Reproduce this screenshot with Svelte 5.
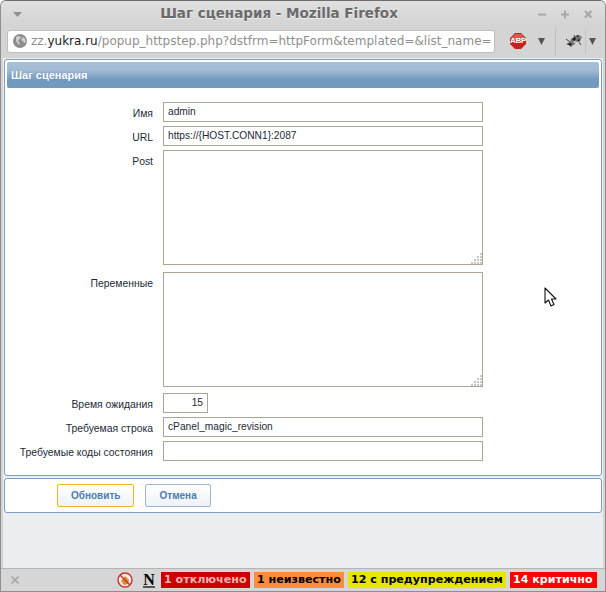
<script>
  const rows = [
    { label: 'Имя', value: 'admin', kind: 'text' },
    { label: 'URL', value: 'https://{HOST.CONN1}:2087', kind: 'text' },
    { label: 'Post', value: '', kind: 'area' },
    { label: 'Переменные', value: '', kind: 'area' },
    { label: 'Время ожидания', value: '15', kind: 'num' },
    { label: 'Требуемая строка', value: 'cPanel_magic_revision', kind: 'text' },
    { label: 'Требуемые коды состояния', value: '', kind: 'text' }
  ];
  const grip = [[10,0],[10,3],[7,3],[10,6],[7,6],[4,6],[10,9],[7,9],[4,9],[1,9]];
</script>

<div class="window">
  <header class="titlebar">
    <svg class="menu" width="9" height="5" viewBox="0 0 9 5"><path d="M0 0h9L4.500 5z" fill="#8f8f8f"/></svg>
    <div class="title">Шаг сценария - Mozilla Firefox</div>
    <div class="controls">
      <svg width="9" height="9" viewBox="0 0 9 9"><path d="M0 4.500h8" stroke="#a8a8a8" stroke-width="2"/></svg>
      <svg width="9" height="9" viewBox="0 0 9 9"><path d="M0 4.500h8M4 .500v8" stroke="#a8a8a8" stroke-width="2"/></svg>
      <svg width="9" height="9" viewBox="0 0 9 9"><path d="M1 1l6.500 6.500M7.500 1L1 7.500" stroke="#a8a8a8" stroke-width="2.400"/></svg>
    </div>
  </header>

  <div class="toolbar">
    <div class="urlbar">
      <svg class="globe" width="14" height="14" viewBox="0 0 14 14">
        <circle cx="7" cy="7" r="7" fill="#8c8c8c"/>
        <path d="M3 3l3-1 2 1-1 2-2 1 1 2 1 3-2-1-2-3zM10 3l2 2 1 3-2 1-1-2-2-1z" fill="#cfcfcf"/>
      </svg>
      <span class="url"><span class="dim">zz.</span><span class="host">yukra.ru</span><span class="dim">/popup_httpstep.php?dstfrm=httpForm&amp;templated=&amp;list_name=</span></span>
    </div>
    <div class="abp">
      <svg width="16" height="16" viewBox="0 0 16 16"><path d="M5 0h6l5 5v6l-5 5H5l-5-5V5z" fill="#c9201c"/><path d="M5 1h6l4 4v2H1V5z" fill="#e2564f"/></svg>
      <span>ABP</span>
    </div>
    <svg class="arrow first" width="7" height="7" viewBox="0 0 7 7"><path d="M0 0h7L3.500 7z" fill="#555"/></svg>
    <div class="sep"></div>
    <svg class="bug" width="18" height="14" viewBox="0 0 18 14">
      <path d="M1 10l4-2 1-3 4-3 4-1 3 2-2 4-4 1-2 3-3 1z" fill="#777"/>
      <path d="M2 10l3-1 2 1-1 2zM7 5l3-2 1 2-2 2zM12 6l3-1-1 3zM11 1.500h3l-1 2z" fill="#1c1c1c"/>
      <path d="M1 5l4 3M9 1l1 3M14 8l2 3M5 11l1 2" stroke="#444" stroke-width="1"/>
      <path d="M8 8l3-1-1 2z" fill="#eee"/>
    </svg>
    <div class="sep thin"></div>
    <svg class="arrow last" width="7" height="7" viewBox="0 0 7 7"><path d="M0 0h7L3.500 7z" fill="#555"/></svg>
  </div>

  <main class="content">
    <section class="panel form-panel">
      <h1 class="head">Шаг сценария</h1>
      <div class="form">
        {#each rows as row}
          <div class="row">
            <span class="label">{row.label}</span>
            {#if row.kind === 'area'}
              <div class="field area">
                <svg class="grip" width="12" height="11" viewBox="0 0 12 11">
                  {#each grip as g}
                    <rect x={g[0]} y={g[1]} width="2" height="2" fill="#c8c8c8"/>
                  {/each}
                </svg>
              </div>
            {:else}
              <div class="field" class:num={row.kind === 'num'}>{row.value}</div>
            {/if}
          </div>
        {/each}
      </div>
    </section>
    <section class="panel actions">
      <button class="btn update">Обновить</button>
      <button class="btn">Отмена</button>
    </section>
  </main>

  <footer class="status">
    <svg class="close" width="10" height="10" viewBox="0 0 10 10"><path d="M1.500 1.500l7 7M8.500 1.500l-7 7" stroke="#a4a4a4" stroke-width="1.600"/></svg>
    <svg class="noscript" width="16" height="16" viewBox="0 0 16 16">
      <circle cx="8" cy="8" r="7" fill="#f3efe8" stroke="#c8332c" stroke-width="1.400"/>
      <path d="M4 9l4-5 4 4-1 4-4 1z" fill="#d98c2c"/>
      <path d="M3 3l10 10" stroke="#c8332c" stroke-width="1.400"/>
    </svg>
    <span class="n">N</span>
    <div class="badges">
      <span class="badge off">1 отключено</span>
      <span class="badge unk">1 неизвестно</span>
      <span class="badge warn">12 с предупреждением</span>
      <span class="badge crit">14 критично</span>
    </div>
  </footer>

  <svg class="cursor" width="14" height="21" viewBox="0 0 14 21"><path d="M1 1v15l3.500-3 2.500 6 3-1.500-2.500-5.500H12z" fill="#fff" stroke="#111" stroke-width="1.100" stroke-linejoin="round"/></svg>
</div>

<style>
  :global(body) { margin: 0; }
  .window {
    position: relative;
    width: 606px;
    height: 592px;
    box-sizing: border-box;
    display: flex;
    flex-direction: column;
    background: #d4d4d4;
    border: 1px solid #8e8e8e;
    border-top-color: #6f6f6f;
    border-radius: 6px 6px 0 0;
    overflow: hidden;
    font-family: "Liberation Sans", sans-serif;
  }
  .titlebar {
    height: 23px;
    flex: none;
    display: flex;
    align-items: center;
    position: relative;
    background: linear-gradient(#e0e0e0, #d4d4d4);
  }
  .menu { margin-left: 12px; margin-top: 3px; }
  .title {
    position: absolute;
    left: 0;
    right: 0;
    top: 4px;
    text-align: center;
    font: bold 13.500px "DejaVu Sans", sans-serif;
    color: #6a6a6a;
    text-shadow: 0 1px 0 #f2f2f2;
    padding-right: 48px;
  }
  .controls {
    margin-left: auto;
    margin-right: 12px;
    margin-top: 3px;
    display: flex;
    gap: 14px;
  }
  .controls svg { display: block; }
  .toolbar {
    height: 34px;
    flex: none;
    display: flex;
    align-items: center;
    background: #d4d4d4;
    padding-left: 6px;
    box-sizing: border-box;
  }
  .urlbar {
    width: 488px;
    height: 23px;
    box-sizing: border-box;
    background: #fff;
    border: 1px solid #bdbdbd;
    border-radius: 3px;
    display: flex;
    align-items: center;
    overflow: hidden;
    white-space: nowrap;
    flex: none;
  }
  .globe { margin: 0 4px 0 5px; flex: none; }
  .url { font: 12px "DejaVu Sans", sans-serif; }
  .dim { color: #8f8f8f; }
  .host { color: #1a1a2a; }
  .abp {
    position: relative;
    width: 16px;
    height: 16px;
    margin-left: 15px;
    flex: none;
  }
  .abp svg { display: block; }
  .abp span {
    position: absolute;
    inset: 0;
    text-align: center;
    font: bold 8px/16px "Liberation Sans", sans-serif;
    letter-spacing: -0.300px;
    color: #fff;
  }
  .arrow { flex: none; }
  .arrow.first { margin-left: 12px; }
  .arrow.last { margin-left: 3px; }
  .sep {
    width: 1px;
    height: 28px;
    background: #bcc0c4;
    margin-left: 10px;
    flex: none;
  }
  .sep.thin {
    height: 26px;
    margin-left: 2px;
    background: #c4c4c4;
  }
  .bug { margin-left: 9px; flex: none; }
  .content {
    flex: 1;
    background: #ebeef1;
    margin: 0 2px;
    padding: 1px 0 0 1px;
    min-height: 0;
  }
  .panel {
    background: #fff;
    border: 1px solid #7f9fc0;
    border-radius: 3px;
    width: 598px;
    box-sizing: border-box;
  }
  .form-panel {
    height: 417px;
    padding: 2px;
  }
  .head {
    margin: 0;
    height: 26px;
    box-sizing: border-box;
    padding-left: 4px;
    border-radius: 2px;
    background: linear-gradient(#a8c0d6, #a3bbd3 30%, #7299be 70%, #7299be);
    color: #fff;
    font: bold 11px/27px "Liberation Sans", sans-serif;
    text-shadow: 0 0 1px #5f7f9f;
  }
  .form {
    margin-top: 14px;
    display: flex;
    flex-direction: column;
    gap: 4px;
  }
  .row {
    display: grid;
    grid-template-columns: 146px 320px;
    column-gap: 10px;
  }
  .row:nth-child(4) { margin-top: 3px; }
  .row:nth-child(5) { margin-top: 2px; }
  .label {
    display: block;
    height: 20px;
    text-align: right;
    font-size: 10.400px;
    line-height: 24px;
    color: #1c2a38;
  }
  .field {
    height: 20px;
    box-sizing: border-box;
    border: 1px solid #aaa796;
    background: #fff;
    font-size: 10.200px;
    line-height: 18px;
    padding: 0 4px;
    color: #1c2a38;
    width: 320px;
    position: relative;
  }
  .field.area { height: 115px; }
  .field.num { width: 45px; text-align: right; }
  .grip { position: absolute; right: 0; bottom: 0; }
  .actions {
    height: 35px;
    margin-top: 2px;
    padding: 5px 0 0 52px;
    display: flex;
    gap: 11px;
    align-items: flex-start;
  }
  .btn {
    height: 23px;
    padding: 0 13px;
    background: linear-gradient(#ffffff, #eef3f7);
    border: 1px solid #9db4cf;
    border-radius: 2px;
    font: bold 10px "Liberation Sans", sans-serif;
    color: #4b7cb0;
  }
  .btn.update { border-color: #fbae2c; }
  .status {
    height: 23px;
    flex: none;
    display: flex;
    align-items: center;
    background: #d6d6d6;
    border-top: 1px solid #b4b4b4;
    box-sizing: border-box;
    padding-left: 9px;
  }
  .close { flex: none; }
  .noscript { margin-left: 97px; flex: none; }
  .n {
    margin-left: 10px;
    width: 12px;
    font: bold 16px/13px "Liberation Serif", serif;
    color: #000;
    border-bottom: 2px solid #555;
    text-align: center;
    flex: none;
  }
  .badges {
    display: flex;
    gap: 4px;
    margin-left: 6px;
  }
  .badge {
    height: 16px;
    box-sizing: border-box;
    font: bold 11.100px/16px "DejaVu Sans", sans-serif;
    padding: 0 3px;
    white-space: nowrap;
    display: block;
    overflow: hidden;
  }
  .off { background: #cc0000; color: #f3b0b0; width: 89px; }
  .unk { background: #ff8c3c; color: #000; width: 90px; }
  .warn { background: #e6e600; color: #000; width: 158px; }
  .crit { background: #ff0000; color: #fff; width: 87px; }
  .cursor { position: absolute; left: 543px; top: 286px; }
</style>
